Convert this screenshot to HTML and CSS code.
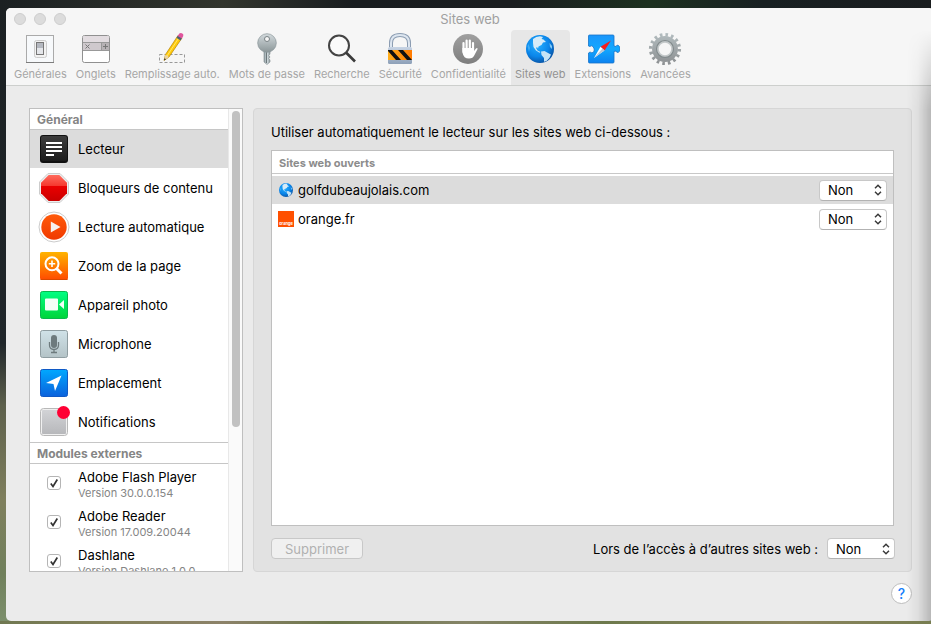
FILE: index.html
```html
<!DOCTYPE html>
<html lang="fr">
<head>
<meta charset="utf-8">
<title>Sites web</title>
<link rel="stylesheet" href="styles.css">
</head>
<body>
<svg class="defs" aria-hidden="true">
  <defs>
    <radialGradient id="sea" cx=".4" cy=".35" r=".7"><stop offset="0" stop-color="#25b0ff"/><stop offset=".6" stop-color="#0a86ea"/><stop offset="1" stop-color="#0a4f9e"/></radialGradient>
    <linearGradient id="steel" x2="0" y2="1"><stop stop-color="#d3dadd"/><stop offset="1" stop-color="#8b9698"/></linearGradient>
    <linearGradient id="silver" x2="1" y2="0"><stop stop-color="#89979c"/><stop offset=".5" stop-color="#d6e0e3"/><stop offset="1" stop-color="#8e999d"/></linearGradient>
    <linearGradient id="body" x2="0" y2="1"><stop stop-color="#c8d4e4"/><stop offset="1" stop-color="#8da0b8"/></linearGradient>
    <linearGradient id="hazard" x2="1" y2="0"><stop stop-color="#ffae1c"/><stop offset="1" stop-color="#ff7a00"/></linearGradient>
    <linearGradient id="disc" x2="0" y2="1"><stop stop-color="#a0a0a0"/><stop offset="1" stop-color="#7e7e7e"/></linearGradient>
    <linearGradient id="gear" x2="0" y2="34" gradientUnits="userSpaceOnUse"><stop stop-color="#b4bec1"/><stop offset="1" stop-color="#8b8e90"/></linearGradient>
    <linearGradient id="puzzle" x2="0" y2="1"><stop stop-color="#1a96fb"/><stop offset=".5" stop-color="#12a8ff"/><stop offset="1" stop-color="#0c82f0"/></linearGradient>
    <linearGradient id="black" x2="0" y2="1"><stop stop-color="#3c3c3c"/><stop offset="1" stop-color="#1c1c1c"/></linearGradient>
    <linearGradient id="stop" x2="0" y2="1"><stop stop-color="#ff6a5c"/><stop offset=".42" stop-color="#f5382e"/><stop offset=".44" stop-color="#ea0000"/><stop offset="1" stop-color="#c90000"/></linearGradient>
    <linearGradient id="play" x2="0" y2="1"><stop stop-color="#ff5a0a"/><stop offset="1" stop-color="#f03a00"/></linearGradient>
    <linearGradient id="amber" x2="0" y2="1"><stop stop-color="#ffb400"/><stop offset="1" stop-color="#ff4a00"/></linearGradient>
    <linearGradient id="green" x2="0" y2="1"><stop stop-color="#00ff83"/><stop offset="1" stop-color="#00d43a"/></linearGradient>
    <linearGradient id="pale" x2="0" y2="1"><stop stop-color="#d0e2e8"/><stop offset="1" stop-color="#b4c3c7"/></linearGradient>
    <linearGradient id="blue" x2="0" y2="1"><stop stop-color="#00a8ff"/><stop offset="1" stop-color="#0b62dc"/></linearGradient>
    <linearGradient id="grey" x2="0" y2="1"><stop stop-color="#d2d3d6"/><stop offset="1" stop-color="#b7b8bb"/></linearGradient>
    <clipPath id="band"><rect x="5" y="18" width="24" height="10"/></clipPath>
    <symbol id="globe" viewBox="0 0 28 28">
      <circle cx="14" cy="14" r="14" fill="url(#sea)"/>
      <path d="M7 4Q10 1.500 14 1.200L17 2 15.500 4 17.500 4.500 20 7 17 7.500 15.500 10 12.500 11.500 12 13.500 11 12 10 13 11.500 15.500 14.500 17 13.500 17.700 10 15.500 7.500 12 7 8Z" fill="#d5ebf8"/>
      <path d="M15 16.500 18.500 16 22 18 25 19.500Q24 23.500 20.500 26L18 26.700 18 23 15.500 20Z" fill="#c5e3f6"/>
      <path d="M23.500 8 26 11 26 14 24 12Z" fill="#80c8f5"/>
      <path d="M1.500 11 2.500 9 4 13 3 17Z" fill="#3fadf4"/>
    </symbol>
    <symbol id="updown" viewBox="0 0 8 12"><path d="M1 4.200 4 1.200 7 4.200M1 7.800 4 10.800 7 7.800" fill="none" stroke="#3c3c3c" stroke-width="1.500"/></symbol>
    <symbol id="tick" viewBox="0 0 14 14"><path d="M3.800 7.500 6 10.500 10.300 3.500" fill="none" stroke="#333" stroke-width="1.700"/></symbol>
  </defs>
</svg>

<div class="window">
  <header class="titlebar">
    <div class="lights"><i></i><i></i><i></i></div>
    <h1>Sites web</h1>
    <nav class="toolbar">
      <button class="tool">
        <svg viewBox="0 0 34 34"><rect x="3.500" y="3.500" width="27" height="27" fill="#f7f9fb" stroke="#aaa"/><path d="M3 30.500H31" stroke="#7d7d7d"/><rect x="11.500" y="8.500" width="12" height="17" rx="2" fill="#f2f2f2" stroke="#ccc"/><rect x="13.500" y="10.500" width="7" height="12" fill="#e4e6ea" stroke="#777"/><path d="M14 11H20V16H14Z" fill="#b4b8c0"/></svg>
        <span>Générales</span>
      </button>
      <button class="tool">
        <svg viewBox="0 0 34 34"><rect x="3.500" y="3.500" width="27" height="27" rx="2" fill="#fff" stroke="#909090"/><path d="M4 5Q4 4 5 4H29Q30 4 30 5V10H4Z" fill="#e2dce0"/><path d="M4 10H30V18H4Z" fill="#cfc9cd"/><path d="M22 10H30V18H22Z" fill="#b7b2b5"/><path d="M4 10.500H30M4 18.500H30M22.500 10V18" stroke="#999"/><path d="M6.500 12.500 10.500 16.500M10.500 12.500 6.500 16.500M26.500 12V17M24 14.500H29" stroke="#777"/></svg>
        <span>Onglets</span>
      </button>
      <button class="tool">
        <svg viewBox="0 0 34 34"><path d="M4.500 22.500H29.500V30.500H4.500Z" fill="none" stroke="#999" stroke-dasharray="3 2"/><path d="M9 28.500 10.500 22.500 23 3.500 27 6 14 25Z" fill="#ffca0a" stroke="#b38108" stroke-width=".7"/><path d="M12 24 24.500 4.800" stroke="#ffe76b"/><path d="M9 28.500 10.500 22.500 14 25Z" fill="#ead3a5"/><path d="M9 28.500 9.500 26.300 11 27.300Z" fill="#222"/><path d="M21.500 5.800 23 3.500 27 6 25.500 8.400Z" fill="#4d6274"/><path d="M22.700 4 24.300 1.500Q26 .5 28 2Q29 3.500 26.900 6.500Z" fill="#e0559d"/></svg>
        <span>Remplissage auto.</span>
      </button>
      <button class="tool">
        <svg viewBox="0 0 34 34"><path d="M14 18H20V22L18.800 23.500 20 25 18.800 26.500 20 28 20 30 17 32.500 14 30Z" fill="url(#silver)" stroke="#828b8e" stroke-width=".6"/><path d="M16.500 20V31" stroke="#6d777a"/><circle cx="17" cy="11" r="9.300" fill="url(#steel)" stroke="#8a9599" stroke-width=".7"/><circle cx="17" cy="7" r="2.500" fill="#f5f5f5" stroke="#788184"/></svg>
        <span>Mots de passe</span>
      </button>
      <button class="tool">
        <svg viewBox="0 0 34 34"><circle cx="14" cy="13.500" r="10" fill="#fafafa" stroke="#444" stroke-width="2"/><path d="M21 20.500 30 29.500" stroke="#3a3a3a" stroke-width="2.600"/></svg>
        <span>Recherche</span>
      </button>
      <button class="tool">
        <svg viewBox="0 0 34 34"><path d="M8 16V11Q8 3 17 3T26 11V16" fill="none" stroke="#8c9db2" stroke-width="4"/><path d="M8 16V11Q8 3 17 3T26 11V16" fill="none" stroke="#dde6f0" stroke-width="2"/><rect x="5" y="15" width="24" height="17" rx="1.500" fill="url(#body)"/><rect x="5" y="18" width="24" height="10" fill="url(#hazard)"/><path clip-path="url(#band)" d="M4 18H9L18 28H13ZM15 18H20L29 28H24Z" fill="#111"/></svg>
        <span>Sécurité</span>
      </button>
      <button class="tool">
        <svg viewBox="0 0 34 34"><circle cx="17" cy="17" r="15" fill="url(#disc)"/><path d="M12.500 20V11M15.600 18V8.500M18.800 18V8.500M22 19V11" stroke="#fff" stroke-width="2.200" stroke-linecap="round"/><path d="M11.400 16H23.100V19L25 16.500Q26.500 15.500 26.600 17L23.500 23Q22 26.500 18 26.500 12.500 26.500 11.600 21Z" fill="#fff"/></svg>
        <span>Confidentialité</span>
      </button>
      <button class="tool selected" aria-current="page">
        <svg viewBox="0 0 34 34"><use href="#globe" x="3" y="3" width="28" height="28"/></svg>
        <span>Sites web</span>
      </button>
      <button class="tool">
        <svg viewBox="0 0 34 34"><path d="M2.500 4Q2.500 3 3.500 3H27Q28 3 28 4V14L30 14.500Q30.500 13 32 13.200 34 14 34 17T32 20.500Q30.500 20.500 30 19L28 19.500V30Q28 31 27 31H3.500Q2.500 31 2.500 30V21L4 20Q6 22 8 19.500 9 17 7 14.500 5 13 4 14.500L2.500 14Z" fill="url(#puzzle)" stroke="#1674c9" stroke-width=".8"/><path d="M25 8.500 18.500 18.500 14.500 14.800Z" fill="#f51d1d"/><path d="M8 26 14.500 14.800 18.500 18.500Z" fill="#fff"/><path d="M8 26 16.500 16.600 18.500 18.500Z" fill="#b9c8d6"/></svg>
        <span>Extensions</span>
      </button>
      <button class="tool">
        <svg viewBox="0 0 34 34"><circle cx="17" cy="17" r="14.300" fill="none" stroke="url(#gear)" stroke-width="3.600" stroke-dasharray="2.600 3.016"/><circle cx="17" cy="17" r="9.700" fill="none" stroke="url(#gear)" stroke-width="6.500"/><circle cx="17" cy="17" r="8.500" fill="none" stroke="#838b8d" stroke-width="1.200"/><circle cx="17" cy="17" r="7" fill="#f6f6f6" stroke="#c3c8c9" stroke-width="1.600"/></svg>
        <span>Avancées</span>
      </button>
    </nav>
  </header>

  <main class="content">
    <aside class="sidebar">
      <div class="list">
        <h2>Général</h2>
        <ul>
          <li><button class="entry selected"><svg viewBox="0 0 32 32"><rect x="2" y="2" width="28" height="28" rx="3" fill="#111"/><rect x="3" y="3" width="26" height="25" rx="2" fill="url(#black)"/><path d="M8 10H24M8 14H24M8 18H24M8 22H16" stroke="#fff" stroke-width="2"/></svg>Lecteur</button></li>
          <li><button class="entry"><svg viewBox="0 0 32 32"><path d="M10 1.500H22L30.500 10V22L22 30.500H10L1.500 22V10Z" fill="#eee" stroke="#ccc"/><path d="M10.700 3H21.300L29 10.700V21.300L21.300 29H10.700L3 21.300V10.700Z" fill="url(#stop)"/></svg>Bloqueurs de contenu</button></li>
          <li><button class="entry"><svg viewBox="0 0 32 32"><circle cx="16" cy="16" r="15" fill="#fff" stroke="#ccc"/><circle cx="16" cy="16" r="12.700" fill="url(#play)"/><path d="M12.800 10.500 22.500 16 12.800 21.500Z" fill="#f6f2f0"/></svg>Lecture automatique</button></li>
          <li><button class="entry"><svg viewBox="0 0 32 32"><rect x="2" y="2" width="28" height="28" rx="2" fill="url(#amber)"/><path d="M2.500 29.500H29.500" stroke="#d94900"/><g fill="none" stroke="#fff"><circle cx="14" cy="13.800" r="6.500" stroke-width="2"/><path d="M14 10.500V17M10.800 13.800H17.200" stroke-width="1.600"/><path d="M18.500 18.500 23.500 23.500" stroke-width="3"/></g></svg>Zoom de la page</button></li>
          <li><button class="entry"><svg viewBox="0 0 32 32"><rect x="2.500" y="2.500" width="27" height="27" rx="2" fill="url(#green)" stroke="#08b94c"/><path d="M8 9.500H19Q20 9.500 20 10.500V20.500Q20 21.500 19 21.500H8Q7 21.500 7 20.500V10.500Q7 9.500 8 9.500ZM21 15.500 26 11V20Z" fill="#f3fff7"/></svg>Appareil photo</button></li>
          <li><button class="entry"><svg viewBox="0 0 32 32"><rect x="2.500" y="2.500" width="27" height="27" rx="2" fill="url(#pale)" stroke="#8f9da1"/><rect x="13" y="7" width="6" height="13" rx="3" fill="#6d7a7d"/><path d="M11.500 14V17Q11.500 21.500 16 21.500T20.500 17V14M16 21.500V24.500M13 24.500H19" fill="none" stroke="#6d7a7d" stroke-width="1.300"/></svg>Microphone</button></li>
          <li><button class="entry"><svg viewBox="0 0 32 32"><rect x="2.500" y="2.500" width="27" height="27" rx="2" fill="url(#blue)" stroke="#1059c5"/><path d="M23.500 8.500 17 24 15.500 17 8 16Z" fill="#fff"/></svg>Emplacement</button></li>
          <li><button class="entry"><svg viewBox="0 0 32 32"><rect x="2.500" y="2.500" width="27" height="27" rx="3" fill="#f0f0f0" stroke="#b8b8b8"/><rect x="4" y="4" width="24" height="24" rx="1" fill="url(#grey)"/><circle cx="25.500" cy="6.500" r="6.500" fill="#ff0034"/></svg>Notifications</button></li>
        </ul>
        <h2 class="second">Modules externes</h2>
        <ul>
          <li><label class="plugin"><span class="check"><input type="checkbox" checked><svg><use href="#tick"/></svg></span><span class="name">Adobe Flash Player<small>Version 30.0.0.154</small></span></label></li>
          <li><label class="plugin"><span class="check"><input type="checkbox" checked><svg><use href="#tick"/></svg></span><span class="name">Adobe Reader<small>Version 17.009.20044</small></span></label></li>
          <li><label class="plugin"><span class="check"><input type="checkbox" checked><svg><use href="#tick"/></svg></span><span class="name">Dashlane<small>Version Dashlane 1.0.0</small></span></label></li>
        </ul>
      </div>
      <div class="track"><div class="thumb"></div></div>
    </aside>

    <section class="panel">
      <p>Utiliser automatiquement le lecteur sur les sites web ci-dessous :</p>
      <div class="sites">
        <table>
          <thead><tr><th colspan="2">Sites web ouverts</th></tr></thead>
          <tbody>
            <tr class="selected">
              <td><div class="site"><svg class="favicon" viewBox="0 0 16 16"><use href="#globe" x="1" y="1" width="14" height="14"/></svg>golfdubeaujolais.com</div></td>
              <td class="choice"><span class="popup"><select aria-label="golfdubeaujolais.com"><option>Non</option><option>Oui</option></select><svg><use href="#updown"/></svg></span></td>
            </tr>
            <tr>
              <td><div class="site"><span class="favicon brand">orange</span>orange.fr</div></td>
              <td class="choice"><span class="popup"><select aria-label="orange.fr"><option>Non</option><option>Oui</option></select><svg><use href="#updown"/></svg></span></td>
            </tr>
          </tbody>
        </table>
      </div>
      <div class="actions">
        <button class="remove" disabled>Supprimer</button>
        <label for="others">Lors de l’accès à d’autres sites web :</label>
        <span class="popup"><select id="others"><option>Non</option><option>Oui</option></select><svg><use href="#updown"/></svg></span>
      </div>
    </section>
  </main>
  <footer><button class="help">?</button></footer>
</div>
<div class="shade"></div>
</body>
</html>
```

FILE: styles.css
```css
* { box-sizing: border-box; }

body {
  margin: 0;
  height: 100vh;
  padding: 8px 0 3px 6px;
  overflow: hidden;
  font: 13px/16px Inter, "Liberation Sans", sans-serif;
  color: #000;
  background:
    linear-gradient(90deg, #1b2022, #32352d 24%, #191d20 38%, #1a1d1f 55%, #1d3120 70%, #182022 82%, #1a1d1f) top / 100% 8px no-repeat,
    linear-gradient(90deg, #707851, #83805a 12%, #8c8269 24%, #6c774b 36%, #858467 50%, #6d794c 65%, #8b855e 85%, #777d50) bottom / 100% 3px no-repeat,
    linear-gradient(#1b2022, #20262a 55%, #5d604c 65%, #7f7f5d 80%, #70805c 92%, #7d906d);
}

button, select { font: inherit; color: inherit; }
button { border: 0; padding: 0; background: none; }
h1, h2, p, ul { margin: 0; padding: 0; font-size: inherit; }
ul { list-style: none; }
.defs { position: absolute; width: 0; height: 0; }

.window {
  height: 100%;
  margin-right: -3px;
  display: flex;
  flex-direction: column;
  background: #ebebeb;
  border-radius: 5px;
  overflow: hidden;
}

.titlebar {
  display: grid;
  grid-template-columns: 1fr auto 1fr;
  background: #f6f6f6;
  border-bottom: 1px solid #cdcfcd;
}
.lights { display: flex; gap: 8px; padding: 5px 8px; }
.lights i { width: 12px; height: 12px; border-radius: 50%; background: #dcdcdc; border: 1px solid #cdcdcd; }
h1 { font-weight: 400; line-height: 22px; color: #a0a0a0; }
.toolbar { grid-column: 1 / -1; display: flex; gap: 1px; padding-left: 4px; }
.tool {
  display: flex;
  flex-direction: column;
  align-items: center;
  height: 55px;
  padding: 2px 4px 0;
  font-size: 11px;
  color: #a6a6a6;
  white-space: nowrap;
}
.tool svg { width: 34px; height: 34px; }
.tool.selected { background: #e7e7e7; color: #929292; border-radius: 4px 4px 0 0; }

.content {
  flex: 1;
  min-height: 0;
  display: grid;
  grid-template-columns: 214px 1fr;
  gap: 10px;
  padding: 22px 22px 0 23px;
}

.sidebar { display: flex; min-height: 0; border: 1px solid #bfbfbf; background: #fff; overflow: hidden; }
.list { flex: 1; overflow: hidden; }
.list h2 { line-height: 18px; padding: 2px 7px 0; font-size: 12px; font-weight: 700; color: #858585; border-bottom: 1px solid #c6c6c6; }
.list .second { border-top: 1px solid #c6c6c6; }
.entry, .plugin { display: flex; align-items: center; height: 39px; border-bottom: 1px solid #fff; }
.entry { gap: 8px; width: 100%; padding-left: 8px; text-align: left; }
.entry svg { width: 32px; height: 32px; }
.entry.selected { background: #dcdcdc; }
.plugin { padding-left: 17px; gap: 17px; white-space: nowrap; }
.name { padding-top: 3px; }
.plugin small { display: block; font-size: 11px; color: #858585; }
.check { display: grid; }
.check input, .check svg { grid-area: 1 / 1; width: 14px; height: 14px; margin: 0; pointer-events: none; }
.check input { appearance: none; border: 1px solid #b5b5b5; border-radius: 3px; background: #fff; pointer-events: auto; }
.track { width: 14px; padding: 2px; background: #fafafa; border-left: 1px solid #e8e8e8; }
.thumb { width: 8px; height: 69%; margin-left: 1px; border-radius: 4px; background: #c1c1c1; }

.panel {
  display: flex;
  flex-direction: column;
  min-height: 0;
  padding: 15px 17px 12px;
  background: #e2e2e2;
  border: 1px solid #d6d6d6;
  border-radius: 4px;
}
.sites { flex: 1; min-height: 0; margin: 10px 0 12px; background: #fff; border: 1px solid #bfbfbf; }
table { width: 100%; border-collapse: separate; border-spacing: 0; }
th { height: 23px; padding: 2px 7px 0; text-align: left; font-size: 11px; font-weight: 700; color: #8c8c8c; border-bottom: 1px solid #c8c8c8; }
tbody::before { content: ""; display: block; height: 2px; }
td { height: 29px; padding: 0 6px; border-bottom: 1px solid #fff; }
tr.selected { background: #dcdcdc; }
.site { display: flex; align-items: center; gap: 4px; }
.favicon { width: 16px; height: 16px; }
.brand { background: #ff5000; color: #fff; font-size: 4px; line-height: 26px; text-align: center; font-weight: 700; overflow: hidden; }
.choice { width: 80px; }

.popup { display: grid; width: 68px; }
.popup select, .popup svg { grid-area: 1 / 1; }
.popup select {
  appearance: none;
  height: 21px;
  padding: 0 8px;
  background: #fff;
  border: 1px solid #c8c8c8;
  border-bottom-color: #b2b2b2;
  border-radius: 4px;
}
.popup svg { width: 8px; height: 12px; place-self: center end; margin-right: 5px; pointer-events: none; }

.actions { display: flex; align-items: center; gap: 9px; margin-right: -1px; }
.remove { width: 92px; height: 21px; margin-right: auto; border: 1px solid #c8c8c8; border-radius: 4px; background: #f0f0f0; color: #b0b0b0; }

footer { display: flex; justify-content: flex-end; padding: 11px 22px 17px; }
.help { width: 21px; height: 21px; border: 1px solid #bdbdbd; border-radius: 50%; background: #fff; color: #147efb; font-size: 14px; font-weight: 500; }

.shade {
  position: absolute;
  inset: 30px 0 3px auto;
  width: 24px;
  pointer-events: none;
  background: linear-gradient(90deg, transparent, rgba(0, 0, 0, .05) 45%, rgba(0, 0, 0, .22));
  mask-image: linear-gradient(transparent, #000 80px);
}
```
